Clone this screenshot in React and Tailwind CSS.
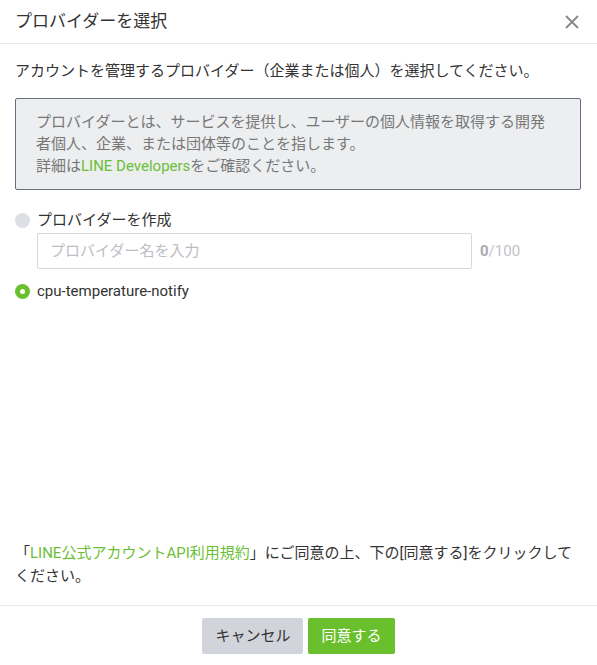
import React, { useState } from "react";

export default function App() {
  const [selected, setSelected] = useState("existing");
  const [name, setName] = useState("");

  return (
    <div
      className="w-[597px] h-[665px] bg-white flex flex-col text-[#333]"
      style={{ fontFamily: '"Roboto", "Noto Sans CJK JP", sans-serif' }}
    >
      {/* Header */}
      <div className="h-[44px] flex items-center justify-between pl-[15px] pr-[18px] border-b border-[#e8e9ec]">
        <h2 className="text-[17px] text-[#333]">プロバイダーを選択</h2>
        <button type="button" className="text-[#888]">
          <svg width="14" height="14" viewBox="0 0 14 14">
            <path d="M1 1L13 13M13 1L1 13" stroke="currentColor" strokeWidth="1.8" />
          </svg>
        </button>
      </div>

      {/* Body */}
      <div className="flex-1 flex flex-col px-[15px] pt-[16px] pb-[17px] text-[15px] leading-[22px]">
        <p>アカウントを管理するプロバイダー（企業または個人）を選択してください。</p>

        <div className="mt-[16px] w-[566px] border border-[#6b6e84] bg-[#eceef0] rounded-[2px] px-[20px] py-[12px] text-[#777]">
          プロバイダーとは、サービスを提供し、ユーザーの個人情報を取得する開発
          <br />
          者個人、企業、または団体等のことを指します。
          <br />
          詳細は<span className="text-[#6bbf35]">LINE Developers</span>をご確認ください。
        </div>

        {/* New provider */}
        <label className="mt-[19px] flex items-center gap-[7px] cursor-pointer">
          <span
            onClick={() => setSelected("new")}
            className={
              selected === "new"
                ? "w-[15px] h-[15px] rounded-full bg-[#6abf2c] flex items-center justify-center"
                : "w-[15px] h-[15px] rounded-full bg-[#dcdfe4] flex items-center justify-center"
            }
          >
            {selected === "new" && <span className="w-[5px] h-[5px] rounded-full bg-white" />}
          </span>
          <span>プロバイダーを作成</span>
        </label>
        <div className="mt-[2px] pl-[22px] flex items-center gap-[8px]">
          <input
            value={name}
            onChange={(e) => setName(e.target.value.slice(0, 100))}
            placeholder="プロバイダー名を入力"
            className="w-[435px] h-[36px] border border-[#d6d8dd] rounded-[2px] px-[12px] text-[15px] outline-none placeholder:text-[#bbbec4]"
          />
          <span className="text-[15px] text-[#bfc2c8]">
            <span className="font-bold text-[#a9acb2]">{name.length}</span>/100
          </span>
        </div>

        {/* Existing provider */}
        <label className="mt-[11px] flex items-center gap-[7px] cursor-pointer">
          <span
            onClick={() => setSelected("existing")}
            className={
              selected === "existing"
                ? "w-[15px] h-[15px] rounded-full bg-[#6abf2c] flex items-center justify-center"
                : "w-[15px] h-[15px] rounded-full bg-[#dcdfe4] flex items-center justify-center"
            }
          >
            {selected === "existing" && <span className="w-[5px] h-[5px] rounded-full bg-white" />}
          </span>
          <span>cpu-temperature-notify</span>
        </label>

        <div className="flex-1" />

        <p className="leading-[23px]">
          「<span className="text-[#6bbf35]">LINE公式アカウントAPI利用規約</span>」にご同意の上、下の[同意する]をクリックして
          <br />
          ください。
        </p>
      </div>

      {/* Footer */}
      <div className="h-[60px] border-t border-[#e8e9ec] flex items-start justify-center gap-[5px] pt-[12px]">
        <button
          type="button"
          className="h-[36px] px-[12px] min-w-[101px] bg-[#d1d4db] text-[#333] text-[15px] rounded-[2px]"
        >
          キャンセル
        </button>
        <button
          type="button"
          className="h-[36px] px-[13px] min-w-[85px] bg-[#6abf2c] text-white text-[15px] rounded-[2px]"
        >
          同意する
        </button>
      </div>
    </div>
  );
}
